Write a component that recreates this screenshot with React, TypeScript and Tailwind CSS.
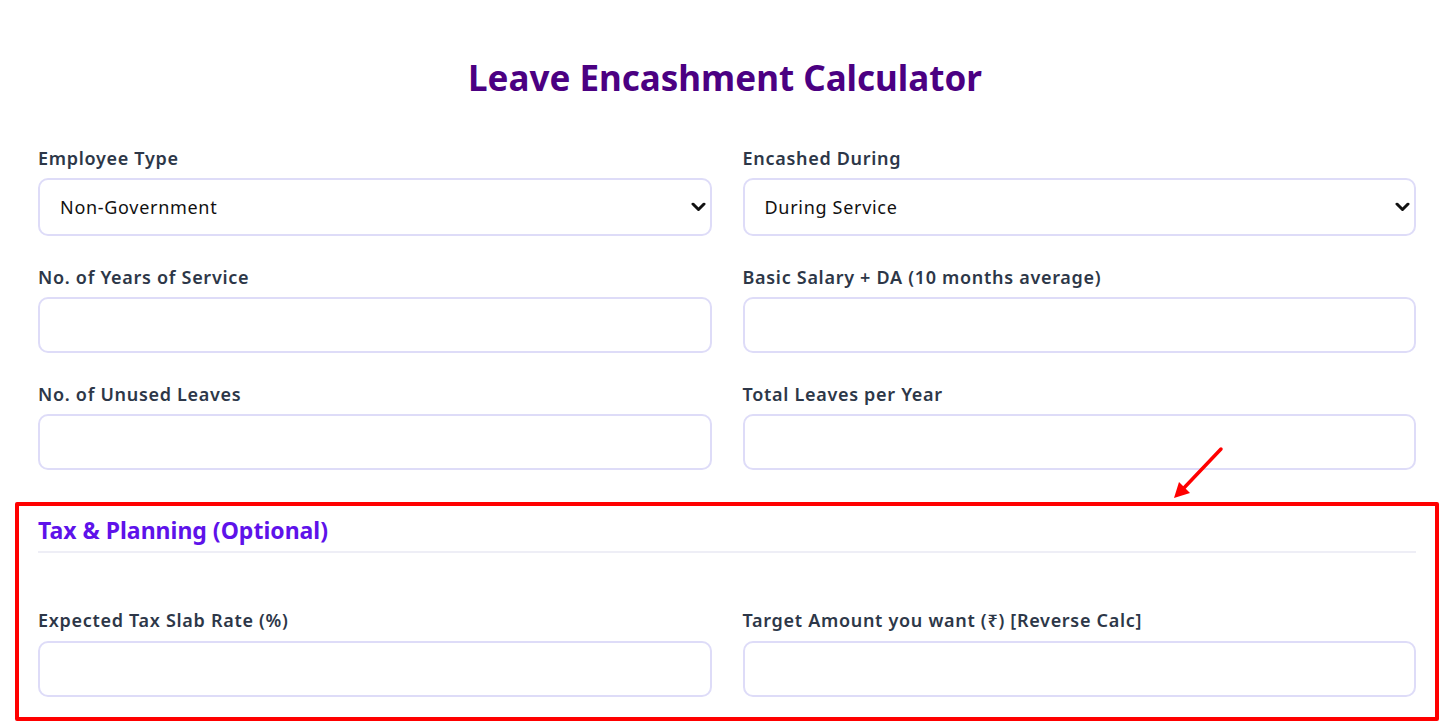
import React from "react";

const font = { fontFamily: '"Noto Sans", "Open Sans", sans-serif' };

function Chevron() {
  return (
    <svg
      className="pointer-events-none absolute right-[6px] top-1/2 -translate-y-1/2"
      width="15"
      height="9"
      viewBox="0 0 15 9"
    >
      <path d="M2 1.5 L7.5 7 L13 1.5" fill="none" stroke="#111" strokeWidth="3" strokeLinecap="round" strokeLinejoin="round" />
    </svg>
  );
}

function SelectField({ label, value, options }: { label: string; value: string; options: string[] }) {
  return (
    <div className="flex flex-col">
      <label className="text-[18px] leading-[24px] tracking-[0.7px] font-semibold text-[#2d3748] mb-[8px]">{label}</label>
      <div className="relative">
        <select
          defaultValue={value}
          className="appearance-none w-full h-[58px] rounded-[10px] border-2 border-[#dedcf8] bg-white pl-[20px] pr-[30px] text-[18px] tracking-[0.7px] text-[#111] outline-none"
          style={font}
        >
          {options.map((o) => (
            <option key={o}>{o}</option>
          ))}
        </select>
        <Chevron />
      </div>
    </div>
  );
}

function InputField({ label, mb = "mb-[8px]" }: { label: string; mb?: string }) {
  return (
    <div className="flex flex-col">
      <label className={`text-[18px] leading-[24px] tracking-[0.7px] font-semibold text-[#2d3748] ${mb}`}>{label}</label>
      <input
        type="text"
        className="w-full h-[56px] rounded-[10px] border-2 border-[#dedcf8] bg-white px-[20px] text-[18px] outline-none"
        style={font}
      />
    </div>
  );
}

export default function App() {
  return (
    <div className="relative w-[1450px] h-[724px] bg-white overflow-hidden" style={font}>
      <h1 className="pt-[58px] text-center text-[35px] leading-[40px] font-bold text-[#4b0082]">
        Leave Encashment Calculator
      </h1>

      <div className="ml-[38px] w-[1378px] mt-[48px] grid grid-cols-2 gap-x-[31px] gap-y-[29px]">
        <SelectField label="Employee Type" value="Non-Government" options={["Government", "Non-Government"]} />
        <SelectField label="Encashed During" value="During Service" options={["During Service", "At Retirement"]} />
        <InputField label="No. of Years of Service" />
        <InputField label="Basic Salary + DA (10 months average)" />
        <InputField label="No. of Unused Leaves" />
        <InputField label="Total Leaves per Year" />
      </div>

      <div className="ml-[15px] w-[1424px] mt-[32px] border-4 border-[#ff0000] rounded-[2px] px-[19px] pt-[9px] pb-[20px]">
        <div className="border-b-2 border-[#eeeef6] pb-[6px]">
          <h2 className="text-[23px] leading-[30px] font-bold text-[#5e12ea]">Tax &amp; Planning (Optional)</h2>
        </div>
        <div className="mt-[55px] grid grid-cols-2 gap-x-[31px]">
          <InputField label="Expected Tax Slab Rate (%)" mb="mb-[9px]" />
          <InputField label="Target Amount you want (₹) [Reverse Calc]" mb="mb-[9px]" />
        </div>
      </div>

      <svg className="absolute left-[1170px] top-[444px]" width="60" height="60" viewBox="0 0 60 60">
        <line x1="51" y1="5" x2="12" y2="46" stroke="#ff0000" strokeWidth="3.5" strokeLinecap="round" />
        <path d="M4 54 L9 38 L20 49 Z" fill="#ff0000" />
      </svg>
    </div>
  );
}
